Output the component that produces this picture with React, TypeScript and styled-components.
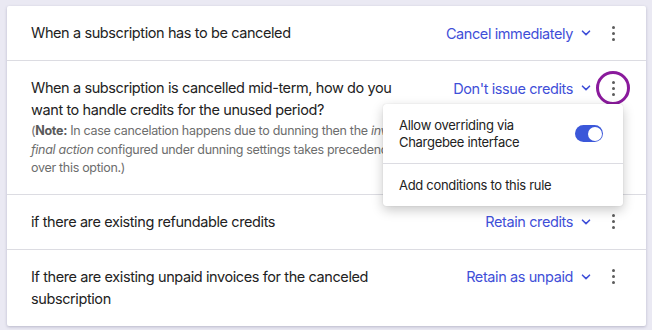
import React, { useState } from "react";
import styled, { createGlobalStyle } from "styled-components";

const GlobalStyle = createGlobalStyle`
  body {
    margin: 0;
    background: #eae9f3;
    font-family: Inter, "Noto Sans", sans-serif;
    color: #222;
  }
`;

const Page = styled.div`
  padding: 6px 6px 7px 7px;
`;

const Card = styled.div`
  background: #fff;
  border-radius: 2px;
  box-shadow: 0 1px 3px rgba(40, 40, 80, 0.25);
`;

const Row = styled.div`
  position: relative;
  display: flex;
  align-items: flex-start;
  padding: 16px 21px 16px 24px;
  border-bottom: 1px solid #dcdce2;

  &:last-child {
    border-bottom: none;
  }
`;

const Question = styled.div`
  flex: 0 1 385px;
`;

const Title = styled.div`
  font-size: 14.5px;
  line-height: 22px;
  letter-spacing: -0.4px;
`;

const Note = styled.div`
  margin-top: 1px;
  font-size: 12.5px;
  line-height: 18.5px;
  letter-spacing: -0.3px;
  color: #6d6d6d;

  b {
    font-weight: 700;
    color: #5a5a5a;
  }
`;

const Controls = styled.div`
  margin-left: auto;
  display: flex;
  align-items: center;
  gap: 10px;
  height: 22px;
`;

const Select = styled.button`
  display: flex;
  align-items: center;
  gap: 8px;
  border: none;
  background: none;
  padding: 0;
  font: inherit;
  font-size: 14.5px;
  letter-spacing: -0.4px;
  color: #3f4fd8;
  cursor: pointer;
`;

const Kebab = styled.button<{ $active?: boolean }>`
  position: relative;
  width: 24px;
  height: 24px;
  border: none;
  background: none;
  padding: 0;
  display: flex;
  flex-direction: column;
  align-items: center;
  justify-content: center;
  gap: 3px;
  cursor: pointer;

  span {
    width: 3px;
    height: 3px;
    border-radius: 50%;
    background: #5c5c5c;
  }

  &::after {
    content: "";
    display: ${(p) => (p.$active ? "block" : "none")};
    position: absolute;
    left: -5px;
    top: -5px;
    width: 28px;
    height: 28px;
    border: 3px solid #8a1a9c;
    border-radius: 50%;
  }
`;

const Menu = styled.div`
  position: absolute;
  top: 43px;
  right: 23px;
  width: 240px;
  background: #fff;
  border-radius: 3px;
  box-shadow: 0 4px 12px rgba(0, 0, 0, 0.22), 0 0 1px rgba(0, 0, 0, 0.2);
  z-index: 2;
`;

const MenuItem = styled.div`
  display: flex;
  align-items: center;
  justify-content: space-between;
  padding: 12.5px 20px 12.5px 16px;
  font-size: 13px;
  line-height: 17px;
  letter-spacing: -0.3px;
  color: #222;

  & + & {
    border-top: 1px solid #dcdce2;
  }
`;

const Toggle = styled.div<{ $on: boolean }>`
  position: relative;
  width: 28px;
  height: 17px;
  border-radius: 9px;
  background: ${(p) => (p.$on ? "#3b57d9" : "#c5c5cc")};
  cursor: pointer;

  &::after {
    content: "";
    position: absolute;
    top: 1.5px;
    left: ${(p) => (p.$on ? "12.5px" : "1.5px")};
    width: 14px;
    height: 14px;
    border-radius: 50%;
    background: #fff;
  }
`;

const Chevron = () => (
  <svg width="10" height="6" viewBox="0 0 10 6" fill="none">
    <path d="M1.5 1.2 L5 4.6 L8.5 1.2" stroke="#3f4fd8" strokeWidth="1.6" strokeLinecap="round" strokeLinejoin="round" />
  </svg>
);

type Rule = {
  title: string;
  value: string;
  note?: boolean;
  menu?: boolean;
};

const rules: Rule[] = [
  { title: "When a subscription has to be canceled", value: "Cancel immediately" },
  {
    title: "When a subscription is cancelled mid-term, how do you want to handle credits for the unused period?",
    value: "Don't issue credits",
    note: true,
    menu: true,
  },
  { title: "if there are existing refundable credits", value: "Retain credits" },
  { title: "If there are existing unpaid invoices for the canceled subscription", value: "Retain as unpaid" },
];

export default function App() {
  const [override, setOverride] = useState(true);

  return (
    <Page>
      <GlobalStyle />
      <Card>
        {rules.map((r) => (
          <Row key={r.title}>
            <Question>
              <Title>{r.title}</Title>
              {r.note && (
                <Note>
                  (<b>Note:</b> In case cancelation happens due to dunning then the <i>invoice final action</i>{" "}
                  configured under dunning settings takes precedence over this option.)
                </Note>
              )}
            </Question>
            <Controls>
              <Select>
                {r.value}
                <Chevron />
              </Select>
              <Kebab $active={r.menu}>
                <span />
                <span />
                <span />
              </Kebab>
            </Controls>
            {r.menu && (
              <Menu>
                <MenuItem>
                  <div>
                    Allow overriding via
                    <br />
                    Chargebee interface
                  </div>
                  <Toggle $on={override} onClick={() => setOverride(!override)} />
                </MenuItem>
                <MenuItem>Add conditions to this rule</MenuItem>
              </Menu>
            )}
          </Row>
        ))}
      </Card>
    </Page>
  );
}
